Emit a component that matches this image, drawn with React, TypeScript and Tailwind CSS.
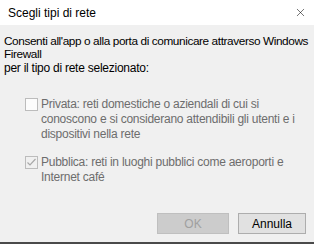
import { X } from "lucide-react";

export default function App() {
  return (
    <div
      className="w-[314px] h-[244px] flex flex-col bg-[#f0f0f0] text-[12px] text-black overflow-hidden"
      style={{ fontFamily: '"Segoe UI", "Liberation Sans", "Noto Sans", sans-serif' }}
    >
      {/* Title bar */}
      <div className="h-[25px] bg-white flex items-center justify-between pl-[8px] pr-[7px] shrink-0">
        <span className="text-[12px] leading-none">Scegli tipi di rete</span>
        <X className="w-[13px] h-[13px] text-black" strokeWidth={1} />
      </div>

      {/* Body */}
      <div className="flex-1 flex flex-col pl-[4px] pt-[10px] tracking-[-0.25px] whitespace-nowrap">
        <p className="leading-[13px] text-[11.8px] tracking-[-0.4px]">
          Consenti all'app o alla porta di comunicare attraverso Windows
          <br />
          Firewall
        </p>
        <p className="leading-[13px] mt-[1px]">per il tipo di rete selezionato:</p>

        <div className="ml-[21px] mt-[22px] flex flex-col gap-[13px] text-[#6d6d6d]">
          <label className="flex items-start gap-[2px]">
            <span className="w-[13px] h-[13px] mt-[1px] border border-[#bcbcbc] bg-[#fcfcfc] shrink-0" />
            <span className="leading-[15px] pl-[1px]">
              Privata: reti domestiche o aziendali di cui si
              <br />
              conoscono e si considerano attendibili gli utenti e i
              <br />
              dispositivi nella rete
            </span>
          </label>
          <label className="flex items-start gap-[2px]">
            <span className="w-[13px] h-[13px] mt-[1px] border border-[#bcbcbc] bg-[#f0f0f0] shrink-0 flex items-center justify-center">
              <svg width="11" height="11" viewBox="0 0 11 11">
                <path d="M1.5 5.5 L4 8 L9.5 2" fill="none" stroke="#a8a8a8" strokeWidth="1.2" />
              </svg>
            </span>
            <span className="leading-[15px] pl-[1px]">
              Pubblica: reti in luoghi pubblici come aeroporti e
              <br />
              Internet café
            </span>
          </label>
        </div>

        <div className="mt-auto mb-[8px] flex justify-end gap-[9px] pr-[8px] tracking-normal">
          <button className="w-[72px] h-[21px] bg-[#cccccc] border border-[#bfbfbf] text-[#a0a0a0] leading-none">
            OK
          </button>
          <button className="w-[68px] h-[21px] bg-[#e1e1e1] border border-[#adadad] text-black leading-none">
            Annulla
          </button>
        </div>
      </div>
      <div className="h-[2px] bg-[#4a4a4a] shrink-0" />
    </div>
  );
}
